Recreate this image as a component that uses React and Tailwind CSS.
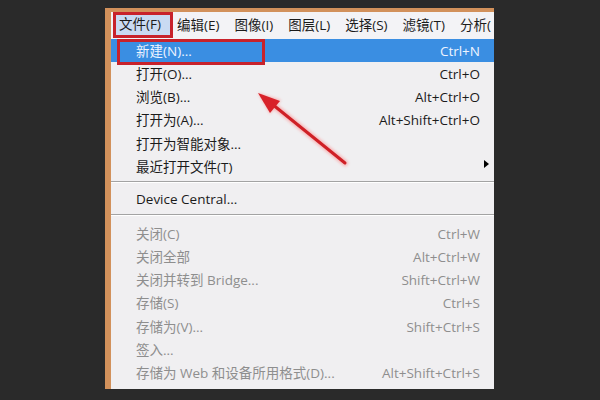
import React from 'react';

const FONT = { fontFamily: '"Open Sans", "Noto Sans CJK SC", sans-serif' };

const MENUBAR = ['编辑(E)', '图像(I)', '图层(L)', '选择(S)', '滤镜(T)', '分析('];

const GROUP1 = [
  ['打开(O)...', 'Ctrl+O'],
  ['浏览(B)...', 'Alt+Ctrl+O'],
  ['打开为(A)...', 'Alt+Shift+Ctrl+O'],
  ['打开为智能对象...', ''],
];

const GROUP3 = [
  ['关闭(C)', 'Ctrl+W'],
  ['关闭全部', 'Alt+Ctrl+W'],
  ['关闭并转到 Bridge...', 'Shift+Ctrl+W'],
  ['存储(S)', 'Ctrl+S'],
  ['存储为(V)...', 'Shift+Ctrl+S'],
  ['签入...', ''],
  ['存储为 Web 和设备所用格式(D)...', 'Alt+Shift+Ctrl+S'],
];

const Row = ({ label, keys, disabled }) => (
  <div
    className={`h-[23.3px] flex items-center justify-between pl-[25px] pr-[14px] text-[13.5px] ${
      disabled ? 'text-[#8e8e8e]' : 'text-[#1b1b1b]'
    }`}
  >
    <span>{label}</span>
    <span>{keys}</span>
  </div>
);

const Separator = ({ top, bottom }) => (
  <div className={`${top} ${bottom}`}>
    <div className="h-px bg-[#a3a3a3]" />
    <div className="h-px bg-white" />
  </div>
);

export default function App() {
  return (
    <div className="w-[600px] h-[400px] bg-[#2a2a2a] relative overflow-hidden" style={FONT}>
      <div className="pt-[8px] pl-[105px]">
        <div className="w-[389px] h-[381px] bg-[#d2915b] pl-[6px] pt-[4px]">
          <div className="h-full bg-[#f0eff1] flex flex-col overflow-hidden">
            {/* Menu bar */}
            <div className="h-[27px] flex items-center text-[13.5px] text-[#1b1b1b] bg-[#f3f3f6] whitespace-nowrap">
              <div className="ml-[2px] h-[26px] w-[60px] -mt-[2px] border-[3px] border-[#c8222b] bg-[#c9daf2] flex items-center pl-[3px] shrink-0">
                文件(F)
              </div>
              <div className="flex gap-[15px] ml-[4px]">
                {MENUBAR.map(m => (
                  <span key={m}>{m}</span>
                ))}
              </div>
            </div>

            {/* Highlighted row */}
            <div className="h-[23.3px] bg-[#3a8ee2] relative flex items-center justify-between pl-[25px] pr-[14px] text-[13.5px] text-[#eef4ff]">
              <span>新建(N)...</span>
              <span>Ctrl+N</span>
              <div className="absolute left-[6px] top-[0px] w-[148px] h-[26px] border-[3px] border-[#c8222b]" />
            </div>

            {GROUP1.map(([l, k]) => <Row key={l} label={l} keys={k} />)}
            <div className="h-[23.3px] flex items-center justify-between pl-[25px] pr-[5px] text-[13.5px] text-[#1b1b1b]">
              <span>最近打开文件(T)</span>
              <span className="w-0 h-0 border-y-[4px] border-y-transparent border-l-[5px] border-l-black -mt-[6px]" />
            </div>

            <Separator top="pt-[2px]" bottom="pb-[5px]" />
            <Row label="Device Central..." keys="" />
            <Separator top="pt-[3px]" bottom="pb-[6px]" />

            {GROUP3.map(([l, k]) => <Row key={l} label={l} keys={k} disabled />)}
          </div>
        </div>
      </div>

      {/* Red arrow annotation */}
      <svg className="absolute left-0 top-0" width="600" height="400" viewBox="0 0 600 400">
        <defs>
          <filter id="glow" x="-20%" y="-20%" width="140%" height="140%">
            <feGaussianBlur stdDeviation="1.6" />
          </filter>
        </defs>
        <g filter="url(#glow)" opacity="0.45">
          <line x1="345" y1="163" x2="272" y2="104" stroke="#ff6a6a" strokeWidth="6" strokeLinecap="round" />
          <polygon points="258,93 281,100 270,114" fill="#ff6a6a" />
        </g>
        <line x1="345" y1="163" x2="272" y2="104" stroke="#cf2026" strokeWidth="3" strokeLinecap="round" />
        <polygon points="258,93 280,101 270,113" fill="#d8222a" />
      </svg>
    </div>
  );
}
